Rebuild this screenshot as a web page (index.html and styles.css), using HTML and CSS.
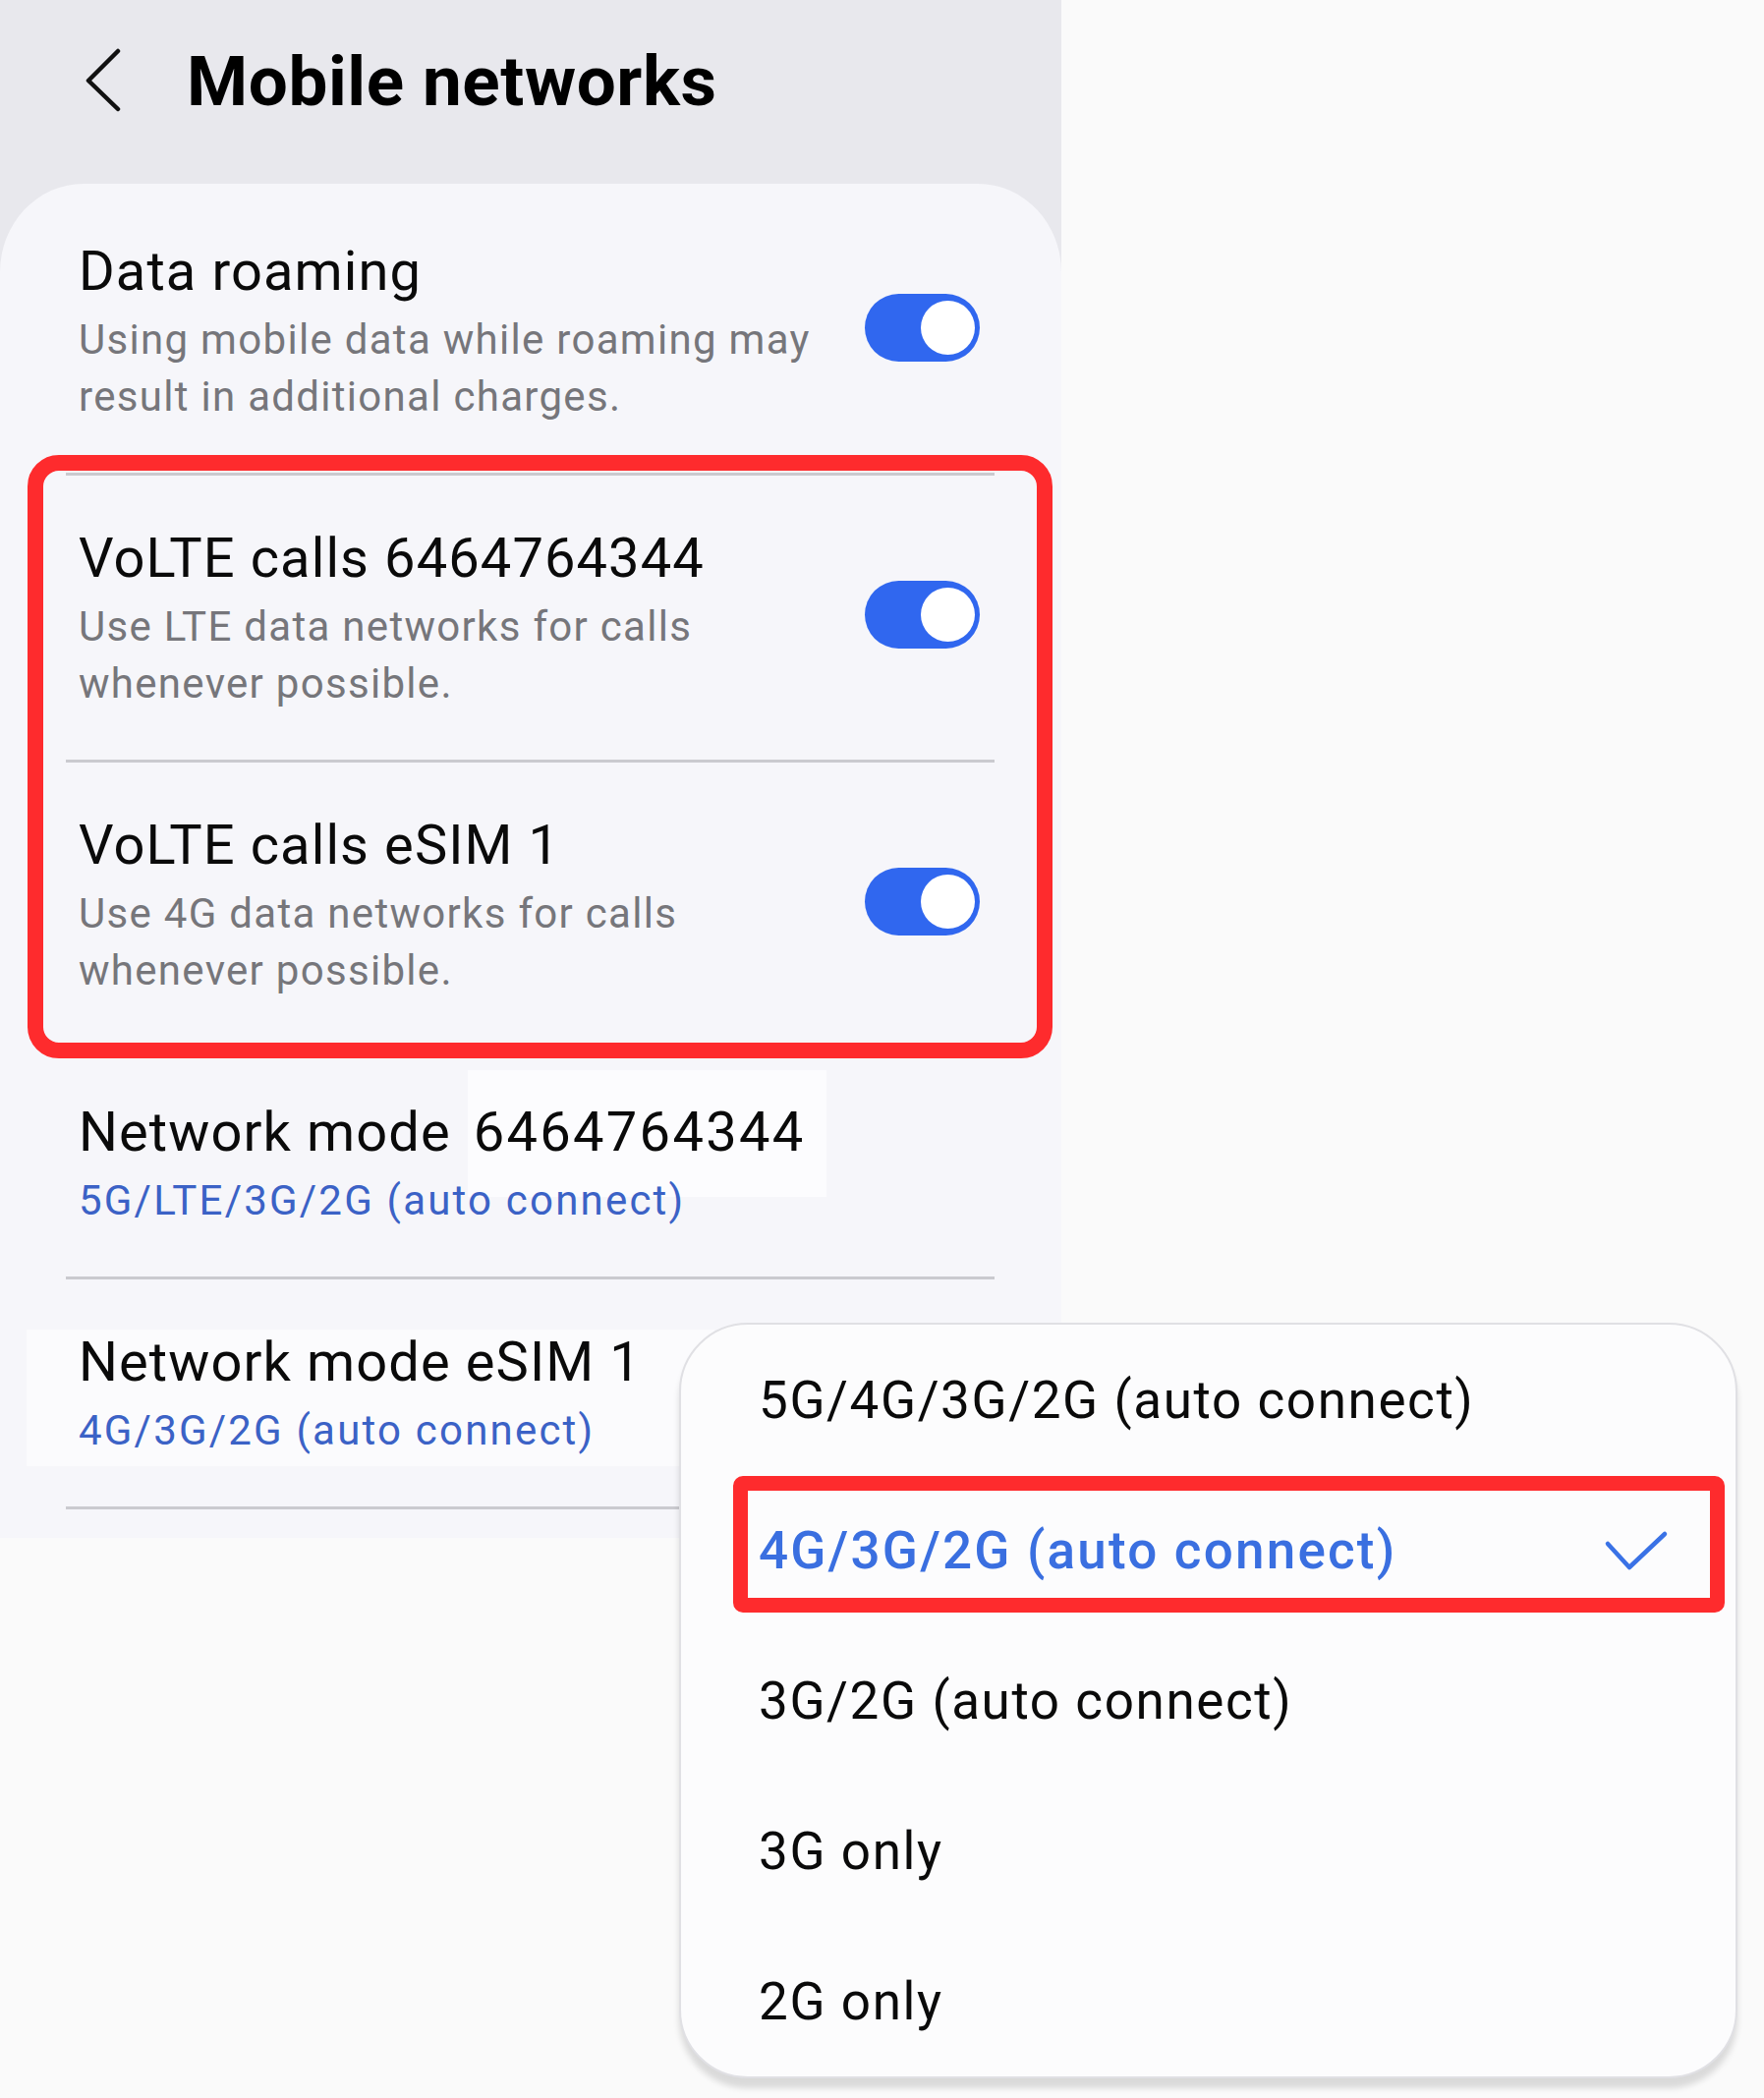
FILE: index.html
```html
<!DOCTYPE html>
<html lang="en">
<head>
<meta charset="utf-8">
<title>Mobile networks</title>
<link rel="stylesheet" href="styles.css">
</head>
<body>
<div class="page">
  <div class="phone">
    <header class="appbar">
      <svg class="back" width="38" height="66" viewBox="0 0 38 66" aria-hidden="true">
        <path d="M34 3 L4 33 L34 62" fill="none" stroke="#111" stroke-width="4.5" stroke-linecap="round" stroke-linejoin="round"/>
      </svg>
      <h1 class="title">Mobile networks</h1>
    </header>
    <main class="card">
      <div class="row">
        <div class="text">
          <div class="label">Data roaming</div>
          <div class="sub">Using mobile data while roaming may<br>result in additional charges.</div>
        </div>
        <span class="toggle"><span class="thumb"></span></span>
      </div>
      <div class="sep"></div>
      <div class="row">
        <div class="text">
          <div class="label">VoLTE calls 6464764344</div>
          <div class="sub">Use LTE data networks for calls<br>whenever possible.</div>
        </div>
        <span class="toggle"><span class="thumb"></span></span>
      </div>
      <div class="sep"></div>
      <div class="row">
        <div class="text">
          <div class="label">VoLTE calls eSIM 1</div>
          <div class="sub">Use 4G data networks for calls<br>whenever possible.</div>
        </div>
        <span class="toggle"><span class="thumb"></span></span>
      </div>
      <div class="sep"></div>
      <div class="row">
        <div class="text">
          <div class="label">Network mode <span class="mask">6464764344</span></div>
          <div class="sub blue">5G/LTE/3G/2G (auto connect)</div>
        </div>
      </div>
      <div class="sep"></div>
      <div class="row">
        <div class="text masked">
          <div class="label">Network mode eSIM 1</div>
          <div class="sub blue">4G/3G/2G (auto connect)</div>
        </div>
      </div>
      <div class="sep"></div>
    </main>
    <div class="mark mark-volte"></div>
  </div>

  <div class="menu">
    <div class="item">5G/4G/3G/2G (auto connect)</div>
    <div class="item selected">
      <span>4G/3G/2G (auto connect)</span>
      <svg class="check" width="66" height="42" viewBox="0 0 66 42" aria-hidden="true">
        <path d="M4 14 L26 38 L62 4" fill="none" stroke="#3a72e6" stroke-width="4.5" stroke-linecap="round" stroke-linejoin="round"/>
      </svg>
    </div>
    <div class="item">3G/2G (auto connect)</div>
    <div class="item">3G only</div>
    <div class="item">2G only</div>
    <div class="mark mark-item"></div>
  </div>
</div>
</body>
</html>
```

FILE: styles.css
```css
* { box-sizing: border-box; }

html, body {
  margin: 0;
  padding: 0;
  background: #fafafa;
}

body {
  font-family: Roboto, "Noto Sans", "Liberation Sans", sans-serif;
  color: #0b0b0c;
}

.page {
  position: relative;
  width: 1795px;
  height: 2135px;
}

.phone {
  position: relative;
  width: 1080px;
  height: 1565px;
  background: #e8e8ed;
  display: flex;
  flex-direction: column;
}

.appbar {
  height: 187px;
  display: flex;
  align-items: center;
  padding: 0 0 22px 86px;
}

.back {
  display: block;
  flex: none;
  margin-top: -2px;
}

.title {
  margin: 0 0 0 66px;
  font-size: 71px;
  line-height: 84px;
  font-weight: 700;
  letter-spacing: 0.6px;
  color: #000;
}

.card {
  flex: 1;
  background: #f6f6fa;
  border-radius: 85px 85px 0 0 / 90px 90px 0 0;
  padding-top: 5px;
}

.row {
  display: flex;
  align-items: center;
  padding: 51px 83px 48px 80px;
}

.text {
  flex: 1;
  display: flex;
  flex-direction: column;
  gap: 8px;
}

.label {
  font-size: 56px;
  line-height: 66px;
  letter-spacing: 1.1px;
  color: #0a0a0a;
  white-space: nowrap;
}

.sub {
  font-size: 42px;
  line-height: 58px;
  letter-spacing: 1.3px;
  color: #76767b;
  white-space: nowrap;
}

.sub.blue {
  color: #3b62c6;
  letter-spacing: 2.2px;
}

.mask {
  background: #fcfcfe;
  padding: 30px 22px 33px 6px;
  margin-left: 2px;
  letter-spacing: 2.3px;
}

.masked {
  background: #fbfbfd;
  margin: 0 0 -7px -53px;
  padding: 0 0 7px 53px;
  width: 700px;
  flex: none;
}

.toggle {
  position: relative;
  flex: none;
  width: 117px;
  height: 69px;
  border-radius: 35px;
  background: #3067ef;
  margin-bottom: 10px;
}

.thumb {
  position: absolute;
  right: 5px;
  top: 7px;
  width: 55px;
  height: 55px;
  border-radius: 50%;
  background: #fff;
}

.sep {
  height: 3px;
  margin: 0 68px 0 67px;
  background: #cacacf;
}

.mark {
  position: absolute;
  border: 16px solid #fe2b2d;
  pointer-events: none;
}

.mark-volte {
  left: 28px;
  top: 463px;
  width: 1043px;
  height: 614px;
  border-radius: 32px;
}

.menu {
  position: absolute;
  left: 691px;
  top: 1346px;
  width: 1077px;
  background: #fcfcfd;
  border: 2px solid #e0e0e4;
  border-radius: 70px;
  box-shadow: 0 10px 6px rgba(0, 0, 0, 0.13);
  padding: 0 0 0 79px;
}

.item {
  height: 153px;
  display: flex;
  align-items: center;
  padding-right: 68px;
  font-size: 53px;
  letter-spacing: 1.6px;
  color: #0a0a0a;
  white-space: nowrap;
}

.item.selected {
  justify-content: space-between;
  color: #3a6fe0;
  font-weight: 500;
  letter-spacing: 2.2px;
}

.check {
  display: block;
  flex: none;
}

.mark-item {
  left: 53px;
  top: 154px;
  width: 1009px;
  height: 139px;
  border-width: 15px;
  border-radius: 10px;
}
```
